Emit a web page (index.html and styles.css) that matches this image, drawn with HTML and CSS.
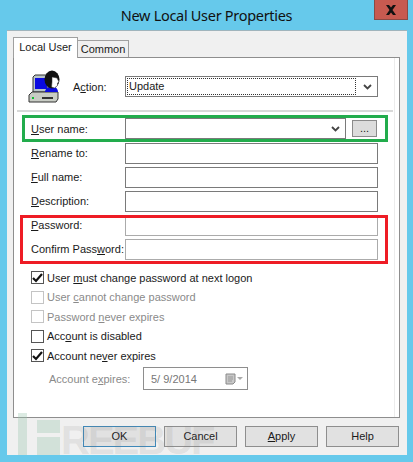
FILE: index.html
```html
<!DOCTYPE html>
<html lang="en">

<head>
    <meta charset="UTF-8">
    <meta name="viewport" content="width=device-width, initial-scale=1.0">
    <title>New Local User Properties</title>
    <link rel="stylesheet" href="styles.css">
</head>

<body>
    <div class="window">
        <header class="titlebar">
            <h1>New Local User Properties</h1>
            <div class="close">
                <svg width="12" height="10" viewBox="0 0 12 10"><path d="M1 0h3l2 2.500L8 0h3L7.500 5 11 10H8L6 7.500 4 10H1l3.500-5z" fill="#111"/></svg>
            </div>
        </header>

        <div class="client">
            <div class="tabs">
                <div class="tab active">Local User</div>
                <div class="tab">Common</div>
            </div>

            <div class="panel">
                <div class="action-row">
                    <svg class="user-icon" width="32" height="34" viewBox="0 0 32 34">
                        <path d="M5 7l2-2h13v17H5z" fill="#b8c4c8" stroke="#333"/>
                        <path d="M7 8h12v11H7z" fill="#0a0ae0"/>
                        <path d="M1 25l3-3h26v7l-2 3H1z" fill="#c8ccc4" stroke="#333"/>
                        <path d="M4 27h2v2H4z" fill="#10c030"/>
                        <path d="M14 27h11v2H14z" fill="#333"/>
                        <path d="M17 22c0-3 3-5 5-5h4c2 0 4 2 4 5z" fill="#0a0ae0"/>
                        <ellipse cx="24" cy="9.500" rx="7.500" ry="9" fill="#111"/>
                        <path d="M24 7l5 1 2 4-1.500 1 0 2.500-3 2.500-3-1 .5-5z" fill="#fff" stroke="#333" stroke-width=".5"/>
                    </svg>
                    <span class="action-label">A<u>c</u>tion:</span>
                    <div class="field combo">
                        <span class="focus-text">Update</span>
                        <svg class="chevron" width="9" height="6" viewBox="0 0 9 6"><path d="M1 1l3.500 3.500L8 1" fill="none" stroke="#444" stroke-width="1.800"/></svg>
                    </div>
                </div>

                <hr class="divider">

                <div class="form-rows">
                    <div class="row user-row">
                        <label><u>U</u>ser name:</label>
                        <div class="field user-field">
                            <svg class="chevron" width="9" height="6" viewBox="0 0 9 6"><path d="M1 1l3.500 3.500L8 1" fill="none" stroke="#444" stroke-width="1.800"/></svg>
                        </div>
                        <div class="browse">...</div>
                    </div>
                    <div class="row">
                        <label><u>R</u>ename to:</label>
                        <div class="field"></div>
                    </div>
                    <div class="row">
                        <label><u>F</u>ull name:</label>
                        <div class="field"></div>
                    </div>
                    <div class="row">
                        <label><u>D</u>escription:</label>
                        <div class="field"></div>
                    </div>
                    <div class="row">
                        <label><u>P</u>assword:</label>
                        <div class="field light"></div>
                    </div>
                    <div class="row">
                        <label>Confirm Pass<u>w</u>ord:</label>
                        <div class="field light"></div>
                    </div>
                </div>

                <div class="checks">
                    <div class="check"><span class="box on"><svg width="11" height="10" viewBox="0 0 11 10"><path d="M1 5l3 3 6-7" fill="none" stroke="#111" stroke-width="2.200"/></svg></span>User <u>m</u>ust change password at next logon</div>
                    <div class="check off"><span class="box"></span>User <u>c</u>annot change password</div>
                    <div class="check off"><span class="box"></span>Password <u>n</u>ever expires</div>
                    <div class="check"><span class="box on"></span>Acc<u>o</u>unt is disabled</div>
                    <div class="check"><span class="box on"><svg width="11" height="10" viewBox="0 0 11 10"><path d="M1 5l3 3 6-7" fill="none" stroke="#111" stroke-width="2.200"/></svg></span>Account ne<u>v</u>er expires</div>
                </div>

                <div class="expires">
                    <span class="expires-label">Account e<u>x</u>pires:</span>
                    <div class="date-field">
                        <span>5/ 9/2014</span>
                        <svg width="18" height="12" viewBox="0 0 18 12">
                            <path d="M1 1h9v8l-2 2H1z" fill="#c8c8c8" stroke="#8a8a8a"/>
                            <path d="M3 4h5M3 6h5M3 8h4" stroke="#999"/>
                            <path d="M12 4h6l-3 3z" fill="#aaa"/>
                        </svg>
                    </div>
                </div>

                <div class="mark green"></div>
                <div class="mark red"></div>
            </div>

            <div class="buttons">
                <div class="btn default">OK</div>
                <div class="btn">Cancel</div>
                <div class="btn"><u>A</u>pply</div>
                <div class="btn">Help</div>
            </div>

            <div class="watermark">
                <svg class="wm-logo" width="43" height="42" viewBox="0 0 43 42">
                    <path d="M0 0h9v42H0z M19 7h23v13H19z M19 24h23v18H19z" fill="#9cc8b0"/>
                </svg>
                <span class="wm-text">REEBUF</span>
            </div>
        </div>
    </div>
</body>

</html>
```

FILE: styles.css
```css
body {
    margin: 0;
    padding: 0;
    background-color: #66c9eb;
    font-family: 'Liberation Sans', Arial, sans-serif;
    font-size: 11px;
    color: #1a1a1a;
}

u {
    text-decoration-thickness: 1px;
    text-underline-offset: 1px;
}

.window {
    width: 413px;
    height: 462px;
    overflow: hidden;
}

.titlebar {
    height: 30px;
    position: relative;
    display: flex;
    justify-content: center;
}

.titlebar h1 {
    margin: 0;
    padding-top: 3px;
    font-family: 'Noto Sans', sans-serif;
    font-size: 14.500px;
    font-weight: normal;
    letter-spacing: -0.300px;
    line-height: 24px;
    color: #111;
}

.close {
    position: absolute;
    top: 0;
    left: 374px;
    width: 34px;
    height: 20px;
    box-sizing: border-box;
    border: 1px solid #8a4a44;
    border-top: 0;
    background-color: #c75a50;
    display: flex;
    align-items: center;
    justify-content: center;
}

.client {
    position: relative;
    width: 400px;
    height: 425px;
    margin-left: 7px;
    box-sizing: border-box;
    border-top: 1px solid #a0b4bc;
    padding: 6px 7px 0 6px;
    background-color: #f0f0f0;
}

.tabs {
    display: flex;
    align-items: flex-end;
    height: 20px;
    position: relative;
    z-index: 1;
}

.tab {
    height: 17px;
    width: 51px;
    box-sizing: border-box;
    border: 1px solid #a0a0a0;
    border-left: 0;
    border-bottom: 0;
    background-color: #f0f0f0;
    text-align: center;
    line-height: 17px;
}

.tab.active {
    height: 21px;
    width: 65px;
    margin-bottom: -1px;
    border-left: 1px solid #a0a0a0;
    background-color: #fff;
    line-height: 18px;
}

.panel {
    position: relative;
    height: 361px;
    box-sizing: border-box;
    border: 1px solid #8e8e8e;
    background-color: #fff;
    box-shadow: inset -4px 0 0 #fff, inset -5px 0 0 #ececec;
}

.action-row {
    display: flex;
    align-items: center;
    padding: 12px 0 0 14px;
    height: 33px;
}

.user-icon {
    flex: none;
}

.action-label {
    width: 52px;
    margin-left: 13px;
}

.field {
    flex: none;
    width: 253px;
    height: 21px;
    box-sizing: border-box;
    border: 1px solid #7a7a7a;
    background-color: #fff;
}

.field.light {
    border-color: #ababab;
}

.combo {
    display: flex;
    align-items: center;
    justify-content: space-between;
    padding: 1px 5px 1px 1px;
}

.focus-text {
    flex: 1;
    height: 15px;
    margin-right: 7px;
    border: 1px dotted #333;
    line-height: 15px;
    padding-left: 1px;
}

.divider {
    margin: 7px 6px 0 3px;
    border: 0;
    border-top: 2px solid #d8d8d8;
}

.form-rows {
    display: flex;
    flex-direction: column;
    gap: 4px;
    margin-top: 6px;
}

.row {
    display: flex;
    align-items: center;
    padding-left: 17px;
    height: 20px;
}

.row label {
    width: 94px;
    white-space: nowrap;
}

.user-row {
    height: 21px;
}

.user-field {
    width: 221px;
    display: flex;
    align-items: center;
    justify-content: flex-end;
    padding-right: 5px;
}

.browse {
    width: 25px;
    height: 17px;
    margin-left: 6px;
    box-sizing: border-box;
    border: 1px solid #8a8a8a;
    background-color: #dcdcdc;
    text-align: center;
    line-height: 15px;
}

.checks {
    display: flex;
    flex-direction: column;
    gap: 6.500px;
    margin-top: 12px;
    padding-left: 17px;
}

.check {
    display: flex;
    align-items: center;
    height: 13px;
    white-space: pre;
}

.check.off {
    color: #8a8a8a;
}

.box {
    flex: none;
    width: 13px;
    height: 13px;
    margin-right: 3px;
    box-sizing: border-box;
    border: 1px solid #c4c4c4;
    display: flex;
    align-items: center;
    justify-content: center;
}

.box.on {
    border-color: #555;
}

.expires {
    display: flex;
    align-items: center;
    margin-top: 5px;
    padding-left: 35px;
}

.expires-label {
    width: 94px;
    color: #8a8a8a;
}

.date-field {
    width: 105px;
    height: 23px;
    box-sizing: border-box;
    border: 1px solid #8e8e8e;
    padding: 0 4px 0 7px;
    display: flex;
    align-items: center;
    justify-content: space-between;
    color: #777;
}

.mark {
    position: absolute;
    box-sizing: border-box;
    border-style: solid;
    border-width: 3px;
}

.mark.green {
    left: 8px;
    top: 57px;
    width: 366px;
    height: 27px;
    border-color: #22ac4c;
}

.mark.red {
    left: 6px;
    top: 157px;
    width: 368px;
    height: 49px;
    border-color: #ee1c25;
}

.buttons {
    display: flex;
    gap: 8px;
    justify-content: flex-end;
    margin-top: 8px;
    padding-right: 1px;
}

.btn {
    width: 73px;
    height: 21px;
    box-sizing: border-box;
    border: 1px solid #8e8e8e;
    background-color: #e1e1e1;
    text-align: center;
    line-height: 19px;
}

.btn.default {
    border-color: #3f88b8;
}

.watermark {
    position: absolute;
    left: 11px;
    top: 382px;
    display: flex;
    align-items: flex-end;
    height: 42px;
}

.wm-logo {
    opacity: 0.35;
}

.wm-text {
    font-size: 40px;
    font-weight: bold;
    line-height: 30px;
    letter-spacing: -2px;
    color: rgba(120, 120, 120, 0.14);
}
```
